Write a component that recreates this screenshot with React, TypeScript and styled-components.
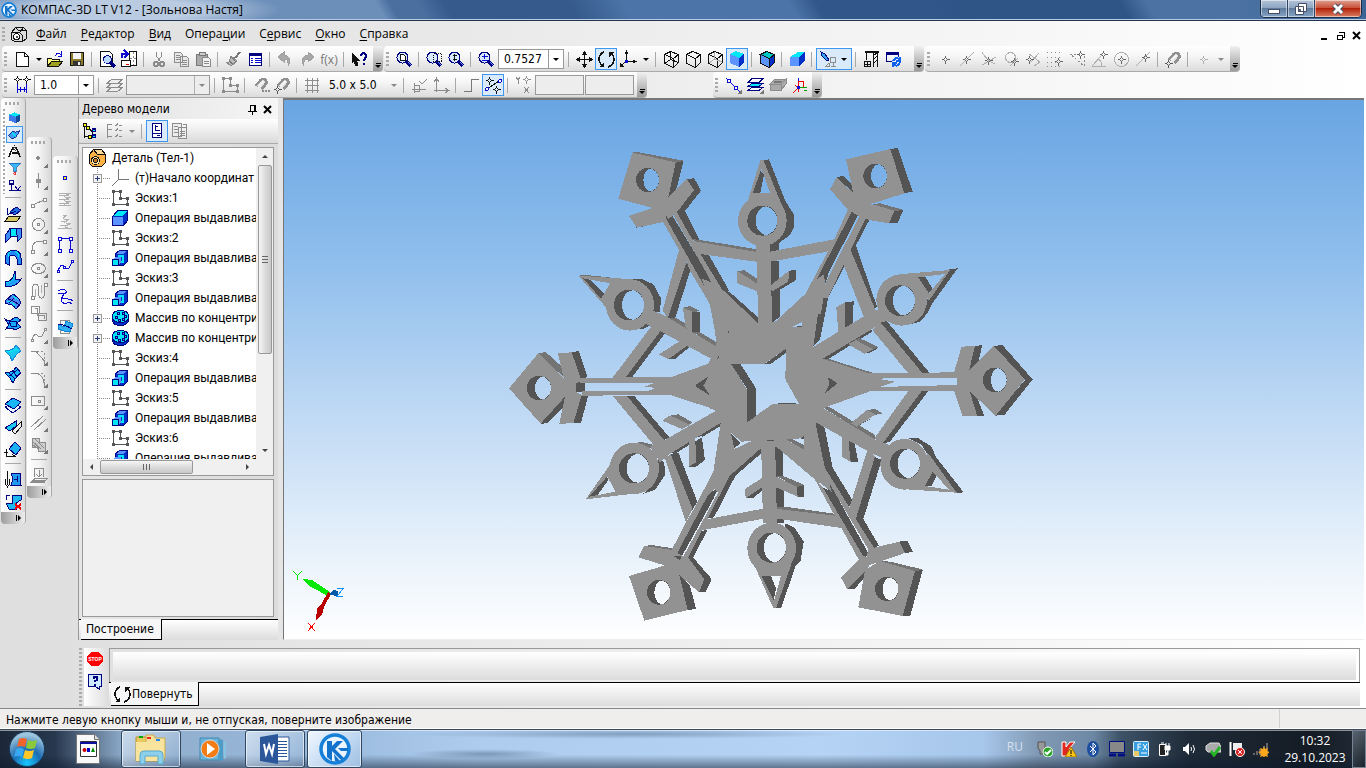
import React from "react";
import styled, { createGlobalStyle, css } from "styled-components";

const ui = `"DejaVu Sans Condensed", "Noto Sans", sans-serif`;
const segoe = `"Open Sans", "Noto Sans", sans-serif`;
const list = `Roboto, "Noto Sans", sans-serif`;

const Global = createGlobalStyle`
  * { box-sizing: border-box; }
  body { margin: 0; font-family: ${ui}; font-size: 12px; color: #000; }
  button { font: inherit; color: inherit; background: none; border: 0; padding: 0; margin: 0; }
  ul { list-style: none; margin: 0; padding: 0; }
`;

/* ---------- icons ---------- */

type Stroke = [d: string, stroke?: string, fill?: string, width?: number];

const K = "#111";
const G = "#8c8c8c";
const LG = "#b0b0b0";
const B = "#0a0ad0";
const N = "#000080";
const C = "#00e8f8";
const M = "#5c94ff";
const D = "#0030c8";

const circle = (x: number, y: number, r: number) =>
  `M${x - r} ${y}a${r} ${r} 0 1 0 ${2 * r} 0a${r} ${r} 0 1 0 ${-2 * r} 0z`;
const sq = (x: number, y: number, s = 2) => `M${x} ${y}h${s}v${s}h${-s}z`;
const star = (x: number, y: number) =>
  `M${x - 3.5} ${y + 0.5}h2l2 -2v-2v2l2 2h2h-2l-2 2v2v-2l-2 -2z`;
const lens = (x: number): Stroke[] => [
  [circle(x, 8.5, 5.5), N, "#d8e8ff"],
  ["M13 13l4 4", N, "none", 3],
  ["M14 13l3 3", M, "none", 1],
];
const wire = (c: string): Stroke[] => [
  ["M3.500 5.500l6 -3l8 3v8l-5 5l-9 -4zM3.500 5.500l9 4l5 -4M12.500 9.500v9", c],
];
const mini = (...s: Stroke[]): Stroke[] => [...s, ["M19 14v5h-5z", "none", "#777"]];
const sketchIn = (c: string): Stroke[] => [
  ["M3.500 3.500h7v7h7v6h-14z", c],
  [sq(2, 2, 3) + sq(9, 2, 3) + sq(9, 9, 3) + sq(16, 9, 3) + sq(16, 15, 3) + sq(2, 15, 3), "none", c],
];
const extrude: Stroke[] = [
  ["M2.500 8.500l5 -6h10v10l-4 5h-11z", N, D],
  ["M3 8l5 -5h9l-4 5z", "none", C],
  ["M3 9h10v8h-10z", "none", M],
];
const cut: Stroke[] = [
  ["M5.500 5.500l4 -3h8v11l-4 4h-8z", N, D],
  ["M6 6l4 -3h7l-4 3z", "none", M],
  ["M8 7h5v2h-3v3h-2zM12 7h2v8h-4v-2h2z", "none", C],
  ["M2.500 11.500h6v6h-6z", N, C],
  ["M3 11l3 -2h5l-2 2zM9 11l2 -2v5l-2 2z", "none", M],
];
const magnet = (c: string): Stroke[] => [
  ["M6 11l5 -6q4 -2 5 1q1 2 -1 4l-4 4", c, "none", 3],
  ["M7 11l5 -5q2 -1 3 1l-5 6", "#ddd", "none", 1],
];

const icons: Record<string, Stroke[]> = {
  part: [
    ["M2.500 8.500l4 -5h8l3 3v8l-4 3h-8l-3 -2z", K, "#ddd"],
    ["M2.500 8.500h8l3 3v6M10.500 8.500l4 -5M6.500 3.500l3 3h8", K],
    [circle(7.5, 12.5, 3), K, "#fff"],
    [sq(7, 12, 2), "none", "#555"],
  ],
  new: [["M4.500 3.500h8l4 4v10h-12z", K, "#fff"], ["M12.500 3.500v4h4", K]],
  open: [
    ["M2.500 17.500v-8h4l1 1h7v3", K, "#ffff80"],
    ["M2.500 17.500l4 -5h11l-4 5z", K, "#a0a020"],
    ["M10 7q3 -5 6 -1M16.500 2v5h-4", B],
  ],
  save: [
    ["M3.500 3.500h13v13h-13z", K, "#8c7c2c"],
    ["M6 4h8v6h-8z", "none", "#f4f4f4"],
    ["M6 12h8v5h-8z", "none", "#333"],
    ["M11 13h2v3h-2z", "none", "#eee"],
  ],
  preview: [
    ["M3.500 2.500h9l3 3v12h-12z", K, "#fff"],
    [circle(10.5, 10.5, 4), N, "#b8d8ff"],
    ["M13 13l5 5", N, "none", 3],
  ],
  print: [
    ["M10.500 2.500h7v14h-7z", K, "#fff"],
    ["M14.500 3v13M11 9.500h6", "dash"],
    ["M2.500 11.500h9v6h-9z", K, "#fff"],
    ["M7 15.500h3", "#e00", "none", 1],
    ["M3 9v-4h5M5 1l4 4l-4 4", B, "none", 2],
  ],
  cut: [["M7.500 3v4l4 6M12.500 3v4l-4 6", G], [circle(7, 15, 2) + circle(13, 15, 2), G, "none", 2]],
  copy: [
    ["M3.500 3.500h6l2 2v8h-8zM9.500 7.500h6l2 2v8h-8z", G, "#e8e8e8"],
    ["M5 6.500h4M5 8.500h4M5 10.500h4M11 11.500h5M11 13.500h5M11 15.500h5", G],
  ],
  paste: [
    ["M3.500 5.500h11v11h-11z", "#777", "#aaa"],
    ["M6 3h6v3h-6z", "#777", "#ccc"],
    ["M9.500 8.500h6l2 2v7h-8z", G, "#f0f0f0"],
    ["M11 12.500h5M11 14.500h5", G],
  ],
  brush: [["M17 3l-5 6", "#777", "none", 2], ["M8 7l6 5l-6 5l-5 -4l3 0z", "#888", "#bbb"], ["M8 8l5 5M6 12l4 3", "#777"]],
  table: [
    ["M4.500 4.500h12v12h-12z", N, "#fff"],
    ["M4 5.500h13", N, "none", 3],
    ["M6 9.500h2M10 9.500h6M6 11.500h2M10 11.500h6M6 13.500h2M10 13.500h6", B],
  ],
  undo: [["M9 3l-6 5l6 5v-3q5 0 4 7q5 -9 -4 -11z", "#a0a0a0", "#a8a8a8"]],
  redo: [["M11 3l6 5l-6 5v-3q-5 0 -4 7q-5 -9 4 -11z", "#a0a0a0", "#a8a8a8"]],
  help: [
    ["M3 4l7 7h-3l2 5l-2 1l-2 -5l-2 2z", K, K],
    ["M12 7q0 -3 3 -3q3 1 2 4l-2 3v1M14 15h2", N, "none", 2],
  ],
  zoomPage: [...lens(8.5), ["M6.500 5.500h3l2 2v4h-5z", K, "#fff"]],
  zoomRegion: [...lens(8.5), ["M9.500 4.500h8v8h-8z", "dashK"]],
  zoomDyn: [...lens(8.5), ["M8.500 5v7M6.500 6.500h4M6.500 10.500h4", K]],
  zoomPm: [...lens(8.5), ["M5.500 7.500h6M8.500 5v5M5.500 11.500h6", B]],
  move: [["M10.500 3v15M3 10.500h15", K], ["M10.500 2l3 4h-6zM10.500 19l3 -4h-6zM2 10.500l4 3v-6zM19 10.500l-4 3v-6z", "none", K]],
  rotate: [
    ["M8 3q-5 2 -5 7q0 4 4 7", K, "none", 1.5],
    ["M12 18q6 -2 6 -8q0 -3 -3 -6", K, "none", 1.5],
    ["M3 18h5v-5zM13 3h5l-5 5z", "none", K],
  ],
  axes: [
    ["M8.500 12v-9M8 12.500h9M8 12l-5 5", K],
    ["M8.500 1l2 4h-4zM19 12.500l-4 2v-4zM2 18v-4l4 4z", "none", K],
    [sq(7, 11, 3), "none", B],
  ],
  cubeWire: [...wire(K), ["M3.500 14.500l6 -4l8 3M9.500 2.500v8", K]],
  cubeHidden: wire(K),
  cubeThin: [...wire(K), ["M4 14l5.500 -4l7.500 3M9.500 3v7", LG]],
  cubeShade: [["M3 5l6 -3l8 3l-5 4z", "none", C], ["M3 5l9 4v9l-9 -4z", "none", M], ["M12 9l5 -4v9l-5 4z", "none", D]],
  cubeEdges: [["M3.500 5.500l6 -3l8 3l-5 4z", K, "#00c8c8"], ["M3.500 5.500l9 4v9l-9 -4z", K, M], ["M12.500 9.500l5 -4v8l-5 5z", K, D]],
  persp: [["M3 8l8 -5h7l-6 5z", "none", C], ["M3 8h9v9h-9z", "none", M], ["M12 8l6 -5v8l-6 6z", "none", D]],
  light: [
    ["M3 3l4 2l4 6l-2 1l-5 -5z", N, "#30a8f0"],
    ["M12.500 8.500h5v5h-5zM15.500 14v4M13 17.500h5M8 17.500h3v-4M11 14l-4 4", G],
  ],
  crane: [
    ["M3.500 3.500h14M12.500 3v15M16.500 3v15M12 7l4 -3M12 11l4 -4M12 15l4 -4M5.500 4v7M3 17.500h6", K],
    ["M3.500 12.500h6v5h-6zM6.500 12v5M3 15.500h6", K],
    ["M4 3h14", K, "none", 2],
  ],
  refresh: [
    ["M3.500 12.500v-9h12v4M3.500 12.500h5", N],
    ["M3 4h13", N, "none", 3],
    ["M10 12q2 -4 6 -2M17 13q-2 5 -6 3M17 8v4h-4M10 18v-4h4", "#1060f0", "none", 2],
  ],
  s1: [[star(10, 10), "#666"]],
  s2: [["M3 17l14 -14", LG], [star(9, 10), "#666"]],
  s3: [["M3 3q4 8 13 12M3 16l14 -8", LG], [star(9, 11), "#666"]],
  s4: [[circle(9.5, 8.5, 5), LG], ["M9 17l8 -8", LG], [star(13, 12), "#666"]],
  s5: [["M6 5l11 8l-6 4M8 13l8 -9", LG], [star(6, 10), "#666"]],
  s6: [["M2 3.500h16M2 8.500h16M2 13.500h16M2 17.500h16", "dots"], [star(13, 12), "#666"]],
  s7: [["M3 5h14v12z", "dash"], [star(13, 5), "#666"]],
  s8: [["M3 17.500h14M3 17l10 -11M9 10q4 2 4 7", LG], [star(14, 5), "#666"]],
  s9: [[circle(10.5, 10.5, 7), LG], [star(10, 10), "#666"]],
  s10: [["M3 17l14 -14", LG], [star(12, 8), "#666"]],
  s11: [[star(10, 10), LG]],
  mag: [...magnet("#909090"), [star(5, 14), "#555"]],
  mag2: [...magnet("#909090"), [sq(12, 15) + sq(15, 15) + sq(18, 15), "none", G]],
  step: [
    [star(5, 4), K],
    [star(14, 4), K],
    ["M5.500 9v9M14.500 9v9M6 14.500h8M8 12v5M12 12v5", B],
  ],
  layers: [["M2.500 16.500l5 -4h11l-5 4zM2.500 12.500l5 -4h11l-5 4zM2.500 8.500l5 -4h11l-5 4z", G, "#eee"]],
  sketchG: sketchIn(G),
  grid: [["M3 5.500h14M3 10.500h14M3 15.500h14M5.500 3v15M10.500 3v15M15.500 3v15", G]],
  cs: [["M5.500 18v-10M3 14.500h14M5.500 10.500h5v6h-5zM10 6l3 3l5 -5", G]],
  ortho: [["M5.500 17v-13M3 7l2.500 -4l2.500 4M3 15.500h14M14 13l4 2.500l-4 2.500", G]],
  elbow: [["M3 16.500h7.500v-12h7.500", "#777"]],
  snapOn: [
    ["M4 14l12 -8", K],
    [star(6, 5), K],
    [star(13, 14), K],
    [circle(4, 14, 1.5) + circle(17, 6, 1.5), B, "#fff"],
  ],
  yx: [["M3 2l2 3l2 -3M5.500 5v4M11 12l5 6M16 12l-5 6", G], [star(13, 4), G]],
  line: [["M3 3l14 14", B], [circle(6, 6, 2) + circle(13, 13, 1.5), B, "#fff"], ["M19 14v5h-5z", "none", "#777"]],
  layersB: [
    ["M3 15.500l4 -3h11l-4 3z", N, "#fff"],
    ["M3 11.500l4 -3h11l-4 3z", N, C],
    ["M3 7.500l4 -4h11l-4 4z", N, "#fff"],
    ["M19 14v5h-5z", "none", "#777"],
  ],
  brick: [["M3 9l5 -5h11l-5 5zM3 9h11v6h-11zM14 9l5 -5v5l-5 6z", G, "#aaa"], ["M7 7l4 -1h4l-3 2z", "#777", "#ddd"]],
  lcs: [
    ["M9.500 3v10", B],
    ["M9.500 6.500h5v6h-5z", "#e00"],
    ["M9 12.500h9M15 15.500h3", "#00a000"],
    ["M9 13l-5 5M6 10l3 3v4", "#e00"],
    [sq(8, 11, 3), "none", B],
  ],

  lCube: [["M3 6l7 -3l7 3l-5 3z", "none", C], ["M3 6l9 3v9l-9 -4z", "none", "#3f7ae8"], ["M12 9l5 -3v8l-5 4z", "none", "#124a9c"]],
  lSurf: [["M2 11l6 -6l3 2l6 -2l-5 8l-5 3z", N, "#38a0f0"], ["M7 7l5 6", C, "none", 2]],
  lCompass: [["M8 4l-6 14M12 4l6 14M6 12l8 0M10 1v2", K, "none", 2], [circle(10, 6, 2), K, "#fff"]],
  lFilter: [["M3 3h15l-6 6v5h-3v-5z", "#1a60b0", "#38b8f8"], [circle(10.5, 16.5, 1.5), "#d00", "#fcc"]],
  lLast: [["M3 3h6v5h-6zM6 9v8M3 17h15M11 11l3 5l5 -6", N, "none", 1.5]],
  l1: [["M2 18l4 -5h12l-4 5z", K, "#d8c860"], ["M7 9l6 -5l5 3l-6 5z", N, "#2070e0"], ["M4 12l9 -4M4 5v7", N]],
  l2: [["M2.500 9.500l5 -6v9l-5 5z", N, "#3c8cf8"], ["M7.500 3.500h7v8h-7z", N, C], ["M13.500 3.500h5v9l-4 4z", N, "#3c8cf8"], ["M6 3.500h12", N]],
  l3: [["M2 16v-6q2 -7 9 -7q7 1 7 8v6h-4v-5q-1 -4 -5 -4q-3 0 -3 5v5z", N, "#2088f0"], ["M8 4q-3 2 -3 6M12 4q4 2 4 6", C]],
  l4: [["M2 13q8 0 10 -11v9l6 -1q-4 8 -16 8z", N, "#20a0f8"], ["M3 14q7 -1 9 -8", C]],
  l5: [["M2 10l8 -7q6 3 8 9l-5 6q-4 -6 -11 -5z", N, "#4888f0"], ["M5 8q7 2 11 6M6 12l7 -7", N], ["M4 10q6 1 9 6M9 4l6 5", C]],
  l6: [["M2 6l4 2l7 -4l5 3l-4 3l4 4l-6 3l-3 -2l-6 1l3 -4z", N, "#18a8f8"], ["M6 8h7v5h-5z", N]],
  l7: [["M2 8q8 0 11 -6l5 6q-5 3 -9 10l-2 -5z", "#1888d8", "#18c8f0"], ["M3 9q8 -1 12 -3", C]],
  l8: [["M2 8q8 0 11 -6l5 6q-5 3 -8 10l-3 -5z", N, "#18b8f8"], ["M6 8l6 6M10 6l4 6M5 12l9 -7", N]],
  l9: [["M2 12l8 -4l8 4l-8 6z", N, "#e8f4ff"], ["M2 9l8 -6l8 4l-7 7z", N, "#18b8f8"]],
  l10: [["M2 11l11 -7v5l-6 5z", N, "#18c8f0"], ["M9 14l9 -9v5l-6 7z", K, "#eee"]],
  l11: [["M6 10l6 -7l6 6l-5 7z", N, "#18b0f0"], ["M3.500 10v7.500h9M1 13.500h4M9 15l3 2.500", K]],
  l12: [["M4.500 2v14M2.500 10v5l2 3l2 -3v-5", K], ["M8 4h10l-1 6l1 6h-10l2 -6z", N, "#2098f0"], ["M11 10h3v3M14 7v4", N]],
  l13: [["M9 4h9v5l-5 3v6h-7l-3 -6h6z", N, "#20b8f0"], ["M12 13l6 5M18 13l-6 5", "#e00", "none", 2], ["M3 9v-5h4", N]],

  p1: mini([circle(9, 9, 1.2), G, G]),
  p2: mini(["M9.500 2v15", G], [circle(9.5, 10, 2), G, G]),
  p3: mini(["M4 12l11 -5", G], [sq(2, 11, 3) + sq(14, 5, 3), G, "#fff"]),
  p4: mini([circle(9.5, 9.5, 6) + circle(9.5, 9.5, 1), G]),
  p5: mini(["M4 15q-3 -8 5 -11h5", G], [sq(2, 13, 3) + sq(14, 3, 3), G, "#fff"]),
  p6: mini(["M2.500 9.500a7 5 0 1 0 14 0a7 5 0 1 0 -14 0z" + circle(9.5, 9.5, 1), G]),
  p7: [["M3.500 16v-8q0 -5 3 -5t3 5v4q0 5 3 5t3 -5v-9", G], ["M6.500 16v-8M12.500 12v-8", LG], [sq(2, 15, 3) + sq(15, 2, 3), G, "#fff"]],
  p8: [["M2.500 3.500h8v7h7v7h-8v-7h-7zM5.500 5.500h3v7h7v3", G]],
  p9: mini(["M3 15q2 -8 6 -4t7 -7", G], [sq(2, 14, 2) + sq(15, 3, 2), G, "#fff"]),
  p10: mini(["M2 4.500h5l8 9v4", G], ["M8 4.500h7v8", "dash"]),
  p11: mini(["M2 4.500h3q9 0 10 9v4", G], ["M8 4.500h7v8", "dash"]),
  p12: mini(["M2.500 5.500h13v9h-13z" + sq(9, 9), G]),
  p13: mini(["M2 14l12 -11M5 17l12 -11", G]),
  p14: mini(["M3.500 3.500h7v4h6v9h-7v-4h-6z", G, "#ccc"], ["M3 6l9 8M5 3l10 10M3 9l6 5", G]),
  p15: [["M5.500 11.500v-8h9v8M10 5v6M7 9l3 3l3 -3M2 17.500h13l3 -4h-12z", G], ["M3 15.500h13", G, "none", 2]],

  q1: [[circle(10, 10, 2), B, "#ff0"]],
  q2: [["M4 3.500h12q-14 4 0 4q-14 4 0 4q-14 4 0 4h-12M4 5.500h10M4 9.500h10M4 13.500h10", LG]],
  q3: [["M8 3.500h4q-8 4 2 4q-10 4 2 4q-12 4 1 5h-14M6 9.500h6M5 13.500h8", LG]],
  q4: [["M4.500 16v-11.500h11v11.500", B], [sq(3, 3, 3) + sq(14, 3, 3) + sq(3, 15, 3) + sq(14, 15, 3), B, "#fff"]],
  q5: [["M3 15q3 -9 7 -4t7 -6", B], [sq(2, 14) + sq(8, 10) + sq(16, 4), B, "#fff"]],
  q6: [["M3 5q6 -4 9 1q-8 5 -3 7q6 -1 9 2", B], ["M3 8q5 -2 6 1q-6 6 1 9q4 -3 7 0", B]],
  q7: [["M5.500 4.500h9v13h-9z", G], ["M3 8l6 3l2 -6l7 3l-3 8l-6 -1l-6 -2z", "#1080d0", "#30b0f0"], ["M3 8q8 1 14 5", N]],

  treeA: [["M4.500 3v14M4 5.500h4M4 15.500h5M9 7l3 4v6", K], [sq(3, 2, 3) + sq(6, 5, 3) + sq(8, 14, 3), K, "#ff0"], [sq(12, 7, 4) + sq(12, 13, 4), "none", N], ["M13 9h2M13 15h2", C]],
  treeB: [["M3.500 3v14M4 3.500h4M4 8.500h4M4 15.500h4M11 4l1 1l2 -3M11 9l1 1l2 -3M11 15l1 1l2 -3M15 4.500h3M15 9.500h3M15 15.500h3", G]],
  treeC: [["M5.500 2.500h9v14h-9z", N, "#fff"], ["M8.500 4v5h4M8 5.500h3M5 12.500h9M10 14.500h3", N]],
  treeD: [["M3.500 2.500h9v13h-9zM9.500 6.500h8v11h-8z", G, "#eee"], ["M5 5.500h4M5 8.500h4M5 11.500h4M11 10.500h5M11 12.500h5M11 14.500h5M14 3.500h3v4", G]],
  detail: [
    ["M2.500 6.500l4 -5h8l4 5v8l-4 4h-9l-3 -3z", K, "#ffb347"],
    ["M6.500 1.500h8l4 5h-8z", K, "#ffd890"],
    [circle(8.5, 12.5, 4), K, "#ffe9a8"],
    [circle(8.5, 12.5, 2), K, "#c87818"],
  ],
  origin: [["M8.500 1v10.500h10M8 12l-6 6", "#777"]],
  sketch: sketchIn("#555"),
  extrude,
  cutop: cut,
  array: [
    ["M2.500 8.500q0 -6 8 -6t8 6v4q-1 5 -8 5t-8 -5z", N, D],
    ["M2.500 8.500q0 -6 8 -6t8 6t-8 6t-8 -6z", N, C],
    [sq(7, 4, 2) + sq(12, 4, 2) + sq(5, 8, 2) + sq(14, 7, 2) + sq(8, 11, 2) + sq(12, 10, 2), N, M],
  ],
  stop: [["M6 2h8l5 5v6l-5 5h-8l-5 -5v-6z", "none", "#f00"]],
  ask: [["M3.500 3.500h13v12h-2v3l-4 -3h-7z", N, "#cdeaff"], ["M8 7h1v-1h3v3l-2 1v1M9 13.500h2", N, "none", 2]],
};

const Svg = styled.svg`
  display: block;
  flex: none;
`;

const Icon = ({ n }: { n: string }) => (
  <Svg width={20} height={20} viewBox="0 0 20 20" aria-hidden="true" shapeRendering="crispEdges">
    {(icons[n] || []).map(([d, s = K, f = "none", w = 1], i) => (
      <path
        key={i}
        d={d}
        stroke={s === "dash" || s === "dots" ? G : s === "dashK" ? K : s}
        fill={f}
        strokeWidth={w}
        strokeDasharray={s === "dash" ? "2 2" : s === "dots" ? "1 3" : s === "dashK" ? "1 1" : undefined}
      />
    ))}
  </Svg>
);

/* ---------- window frame ---------- */

const Desktop = styled.div`
  height: 100vh;
  display: flex;
  flex-direction: column;
  overflow: hidden;
  background: linear-gradient(90deg, #dedede, #fff);
`;

const TitleBar = styled.header`
  height: 21px;
  flex: none;
  display: flex;
  align-items: center;
  gap: 4px;
  padding-left: 1px;
  border-bottom: 1px solid #22344f;
  box-shadow: inset 0 -1px #b9cbe2;
  font-family: ${segoe};
  background:
    radial-gradient(ellipse 160px 22px at 120px 10px, rgba(205, 218, 235, 0.8) 50%, rgba(205, 218, 235, 0)),
    linear-gradient(60deg, #6c8fba 0 28%, #4b70a0 29% 31%, #355a8b 33% 42%, #4d74a8 46% 58%, #31568a 60% 68%, #2f5587 70% 82%, #4b72a2 84% 90%, #3b6496);
`;

const Title = styled.h1`
  margin: 0;
  flex: 1;
  font-size: 12px;
  font-weight: 400;
  line-height: 18px;
`;

const Caption = styled.div`
  display: flex;
  align-self: flex-start;
  height: 18px;
  margin-right: 4px;
  border: 1px solid #1d2f48;
  border-top: 0;
  border-radius: 0 0 5px 5px;
  overflow: hidden;
`;

const CaptionButton = styled.button<{ $close?: boolean }>`
  width: ${(p) => (p.$close ? 46 : 27)}px;
  display: grid;
  place-items: center;
  border-right: ${(p) => (p.$close ? 0 : "1px solid #2e4463")};
  box-shadow: inset 0 0 0 1px rgba(255, 255, 255, 0.5);
  background: ${(p) =>
    p.$close
      ? "linear-gradient(#dfa191, #c9523b 45%, #b3230c 50%, #d98064)"
      : "linear-gradient(#b4c4d8, #8ea5c1 45%, #5f7c9f 50%, #86a4c6)"};
`;

const MenuBar = styled.nav`
  height: 25px;
  flex: none;
  display: flex;
  align-items: center;
  padding-right: 2px;
  font-family: ${segoe};
`;

const MenuItem = styled.button`
  padding: 0 7px;
  line-height: 22px;
  u {
    text-underline-offset: 2px;
  }
`;

const MdiButtons = styled.div`
  margin-left: auto;
  display: flex;
  align-items: center;
  gap: 2px;
  padding-top: 5px;
`;

const Grip = styled.span<{ $flat?: boolean }>`
  flex: none;
  width: ${(p) => (p.$flat ? 16 : 3)}px;
  height: ${(p) => (p.$flat ? 3 : 14)}px;
  background: repeating-linear-gradient(${(p) => (p.$flat ? 90 : 180)}deg, #aaa 0 2px, transparent 2px 4px);
  margin: ${(p) => (p.$flat ? "4px auto" : "0 4px 0 2px")};
`;

/* ---------- toolbars ---------- */

const BarRow = styled.div`
  height: 26px;
  flex: none;
  display: flex;
  padding-left: 2px;
`;

const Toolbar = styled.div<{ $gap?: number }>`
  display: flex;
  align-items: center;
  height: 26px;
  padding-top: 1px;
  margin-left: ${(p) => p.$gap || 0}px;
  border-bottom: 1px solid #aaa;
  border-radius: 4px;
  background: linear-gradient(#fff, #f6f6f6 40%, #dcdcdc);
`;

const ToolButton = styled.button<{ $on?: boolean; $wide?: boolean }>`
  flex: none;
  width: ${(p) => (p.$wide ? 36 : 22)}px;
  height: 22px;
  display: flex;
  align-items: center;
  justify-content: center;
  ${(p) =>
    p.$on &&
    css`
      border: 1px solid #3d97ee;
      background: #d9ebfb;
    `}
`;

const Sep = styled.span`
  flex: none;
  width: 8px;
  height: 15px;
  background: linear-gradient(#a8a8a8, #a8a8a8) 3px 0 / 1px 100% no-repeat;
`;

const Drop = styled.button<{ $dim?: boolean; $w?: number }>`
  flex: none;
  width: ${(p) => p.$w || 13}px;
  height: 20px;
  display: grid;
  place-items: center;
  color: ${(p) => (p.$dim ? "#888" : "#000")};
  &::after {
    content: "";
    border: 3px solid transparent;
    border-top-color: currentColor;
    border-bottom: 0;
  }
`;

const Cap = styled.button`
  align-self: stretch;
  width: 10px;
  margin: -1px 0 0 auto;
  display: flex;
  flex-direction: column;
  align-items: center;
  justify-content: flex-end;
  gap: 1px;
  padding-bottom: 3px;
  border-radius: 0 4px 4px 0;
  background: linear-gradient(#f0f0f0, #c4c4c4 50%, #9a9a9a);
  &::before {
    content: "";
    width: 5px;
    height: 1px;
    background: #000;
  }
  &::after {
    content: "";
    border: 3px solid transparent;
    border-top-color: #000;
    border-bottom: 0;
  }
`;

const Combo = styled.span<{ $w: number; $off?: boolean }>`
  position: relative;
  flex: none;
  width: ${(p) => p.$w}px;
  height: 20px;
  display: flex;
  margin: 0 1px;
  border: 1px solid #999;
  background: ${(p) => (p.$off ? "#ededed" : "#fff")};
  &::after {
    content: "";
    position: absolute;
    right: 4px;
    top: 8px;
    border: 3px solid transparent;
    border-top-color: ${(p) => (p.$off ? "#888" : "#000")};
    border-bottom: 0;
    pointer-events: none;
  }
  select {
    appearance: none;
    flex: 1;
    min-width: 0;
    border: 0;
    padding: 0 16px 0 5px;
    color: #000;
    font: 12px ${ui};
    background: linear-gradient(#999, #999) right 14px top 0 / 1px 100% no-repeat;
  }
`;

const Coord = styled.input`
  width: 49px;
  height: 20px;
  margin-right: 1px;
  border: 1px solid #999;
  background: #ededed;
`;

const Fx = styled.span`
  font: 12px ${segoe};
  color: #777;
`;

const GridStep = styled.span`
  width: 58px;
  padding-left: 6px;
`;

const Fill = styled.span<{ $w: number }>`
  width: ${(p) => p.$w}px;
`;

/* "|" is a separator, "v" and "vd" are menu arrows, "*" marks a pressed button. */
const tools = (names: string[]) =>
  names.map((t, i) => {
    if (t === "|") return <Sep key={i} />;
    if (t === "v") return <Drop key={i} aria-label="Список" />;
    if (t === "vd") return <Drop key={i} $dim aria-label="Список" />;
    if (t === "fx")
      return (
        <ToolButton key={i}>
          <Fx>f(x)</Fx>
        </ToolButton>
      );
    const on = t[0] === "*";
    const name = on ? t.slice(1) : t;
    return (
      <ToolButton key={i} $on={on} aria-label={name}>
        <Icon n={name} />
      </ToolButton>
    );
  });

/* ---------- side columns ---------- */

const Body = styled.main`
  flex: 1;
  min-height: 0;
  display: flex;
`;

const Rail = styled.div<{ $top: number }>`
  flex: none;
  align-self: flex-start;
  width: 25px;
  margin: ${(p) => p.$top}px 0 0 1px;
  display: flex;
  flex-direction: column;
  border-right: 1px solid #a8a8a8;
  border-radius: 4px;
  background: linear-gradient(90deg, #fff, #f4f4f4 50%, #d8d8d8);
`;

const RailButton = styled.button<{ $short?: boolean; $on?: boolean }>`
  height: ${(p) => (p.$short ? 17 : 22)}px;
  margin-left: ${(p) => (p.$short ? 5 : 1)}px;
  width: ${(p) => (p.$short ? 17 : 22)}px;
  display: grid;
  place-items: center;
  border: ${(p) => (p.$on ? "1px solid #3d97ee" : "0")};
  background: ${(p) => (p.$on ? "#d9ebfb" : "none")};
  svg {
    width: ${(p) => (p.$short ? 15 : 20)}px;
    height: ${(p) => (p.$short ? 15 : 20)}px;
  }
`;

const TabGroup = styled.div`
  background: repeating-linear-gradient(180deg, #aaa 0 2px, transparent 2px 4px) 2px 0 / 2px 100% no-repeat;
`;

const RailSep = styled.span`
  height: 8px;
  background: linear-gradient(#a8a8a8, #a8a8a8) 4px 3px / 16px 1px no-repeat;
`;

const RailCap = styled.button`
  height: 12px;
  display: flex;
  align-items: center;
  justify-content: flex-end;
  gap: 1px;
  padding-right: 4px;
  border-radius: 0 0 4px 4px;
  background: linear-gradient(90deg, #9c9c9c, #eee);
  &::before {
    content: "";
    width: 1px;
    height: 6px;
    background: #000;
  }
  &::after {
    content: "";
    border: 3px solid transparent;
    border-left-color: #000;
    border-right: 0;
  }
`;

const RailItems = ({ names }: { names: string[] }) => (
  <>
    {names.map((n, i) =>
      n === "|" ? (
        <RailSep key={i} />
      ) : (
        <RailButton key={i} aria-label={n}>
          <Icon n={n} />
        </RailButton>
      )
    )}
    <RailCap aria-label="Ещё" />
  </>
);

/* ---------- model tree ---------- */

const Panel = styled.aside`
  flex: none;
  width: 200px;
  margin-right: 5px;
  display: flex;
  flex-direction: column;
  border-left: 1px solid #999;
  background: linear-gradient(90deg, #e6e6e6, #dcdcdc);
`;

const PanelHead = styled.div`
  height: 21px;
  flex: none;
  display: flex;
  align-items: center;
  padding: 0 3px;
  background: linear-gradient(90deg, #dfdfdf, #f6f6f6);
  span {
    flex: 1;
  }
`;

const PanelTools = styled.div`
  height: 25px;
  flex: none;
  display: flex;
  align-items: center;
  background: linear-gradient(#fff, #dadada);
  border-bottom: 1px solid #aaa;
`;

const Frames = styled.div`
  flex: 1;
  min-height: 0;
  display: flex;
  flex-direction: column;
  gap: 3px;
  padding: 3px 4px 2px 3px;
`;

const TreeFrame = styled.div`
  flex: 330;
  min-height: 0;
  display: grid;
  grid-template: minmax(0, 1fr) 16px / minmax(0, 1fr) 17px;
  border: 1px solid #999;
  background: #f0f0f0;
`;

const DetailFrame = styled.div`
  flex: 137;
  border: 1px solid #999;
  background: #f0f0f0;
`;

const Tree = styled.ul`
  overflow: hidden;
  background: #fff;
  font-family: ${list};
`;

const TreeRow = styled.li<{ $root?: boolean }>`
  height: 20px;
  display: flex;
  align-items: center;
  gap: 5px;
  padding-left: ${(p) => (p.$root ? 4 : 27)}px;
  white-space: nowrap;
  background: ${(p) =>
    p.$root
      ? "none"
      : "repeating-linear-gradient(180deg, #888 0 1px, transparent 1px 2px) 14px 0 / 1px 100% no-repeat, repeating-linear-gradient(90deg, #888 0 1px, transparent 1px 2px) 14px 10px / 13px 1px no-repeat"};
`;

const Expander = styled.button`
  flex: none;
  width: 9px;
  height: 9px;
  margin: 0 3px 0 -17px;
  border: 1px solid #999;
  background:
    linear-gradient(#223a78, #223a78) 3px 1px / 1px 5px no-repeat,
    linear-gradient(#223a78, #223a78) 1px 3px / 5px 1px no-repeat,
    #f4f4f4;
`;

const VScroll = styled.div`
  display: flex;
  flex-direction: column;
  align-items: center;
  justify-content: space-between;
  background: #f0f0f0;
`;

const HScroll = styled.div`
  display: flex;
  align-items: center;
  background: #f0f0f0;
`;

const Arrow = styled.button<{ $dir: "up" | "down" | "left" | "right" }>`
  flex: none;
  width: 17px;
  height: 17px;
  display: grid;
  place-items: center;
  &::after {
    content: "";
    border: 3px solid transparent;
    border-${(p) => ({ up: "bottom", down: "top", left: "right", right: "left" })[p.$dir]}-color: #444;
    border-${(p) => ({ up: "top", down: "bottom", left: "left", right: "right" })[p.$dir]}: 0;
  }
`;

const Thumb = styled.span<{ $v?: boolean }>`
  border: 1px solid #999;
  border-radius: 2px;
  ${(p) =>
    p.$v
      ? css`
          width: 14px;
          flex: 187;
          background:
            repeating-linear-gradient(180deg, #666 0 1px, transparent 1px 3px) center / 6px 7px no-repeat,
            linear-gradient(90deg, #f6f6f6, #dcdcdc 50%, #c8c8c8);
        `
      : css`
          height: 14px;
          flex: 90;
          background:
            repeating-linear-gradient(90deg, #666 0 1px, transparent 1px 3px) center / 7px 6px no-repeat,
            linear-gradient(#f6f6f6, #dcdcdc 50%, #c8c8c8);
        `}
`;

const Rest = styled.span<{ $n: number }>`
  flex: ${(p) => p.$n};
`;

const TabStrip = styled.div<{ $tall?: boolean }>`
  flex: none;
  height: ${(p) => (p.$tall ? 24 : 21)}px;
  display: flex;
  padding-left: 2px;
  border-top: 1px solid #000;
  background: linear-gradient(#fff, #dcdcdc);
`;

const Tab = styled.button<{ $icon?: boolean }>`
  display: flex;
  align-items: center;
  margin-top: -1px;
  padding: ${(p) => (p.$icon ? "0 5px 0 1px" : "0 7px 0 5px")};
  border: solid #000;
  border-width: 0 1px 1px 0;
  background: #f6f6f6;
`;

/* ---------- 3D view ---------- */

const View = styled.section`
  flex: 1;
  min-width: 0;
  margin-right: 2px;
  border: solid #777;
  border-width: 2px 0 0 1px;
  border-bottom: 1px solid #eee;
  background: linear-gradient(#69a5e3, #92c0ed 32%, #bad6f3 55%, #e2eefa 80%, #fff);
  svg {
    display: block;
    width: 100%;
    height: 100%;
  }
`;

const LIGHT = "#929292";
const MID = "#747474";
const DARK = "#545454";

const ell = (cx: number, cy: number, rx: number, ry: number) =>
  `M${cx - rx} ${cy}a${rx} ${ry} 0 1 0 ${2 * rx} 0a${rx} ${ry} 0 1 0 ${-2 * rx} 0z`;

/* A bore through the plate: the front rim and the narrower opening seen through it. */
const bore = (l: number, r: number, cy: number, ry: number, through: number) => ({
  rim: ell((l + r) / 2, cy, (r - l) / 2, ry),
  wall: ell((l + r) / 2, cy, (r - l) / 2, ry) + ell((through + r) / 2, cy, (r - through) / 2, ry - 2),
});

type Part = { x: number; y: number; dark: string; mid?: string; light: string[]; top?: string };

const b1 = bore(408, 477, 120, 36, 430);
const b2 = bore(342, 432, 495, 46, 366);
const b3 = bore(80, 153, 744, 36, 105);
const c1 = bore(295, 366, 108, 37, 318);
const c2 = bore(360, 450, 482, 46, 384);
const c3 = bore(654, 725, 720, 37, 678);
const c4 = bore(-53, 37, 242, 45, -28);
const d1 = bore(357, 447, 280, 45, 380);
const d2 = bore(441, 511, 652, 37, 463);
const e1 = bore(375, 465, 266, 45, 398);
const e2 = bore(330, 400, 642, 36, 353);
const e3 = bore(-25, 63, 518, 45, -3);

const parts: Part[] = [
  {
    x: 500,
    y: 140,
    dark:
      "M527 67L551 62L530 145L505 172ZM560 117L583 115L603 152L555 213L598 300L575 300L530 217L582 150Z" +
      "M492 225L514 222L628 410L634 430L607 437ZM600 342L625 342L688 453L668 457ZM558 366L572 388L526 533L503 533Z" +
      "M400 418L425 417L460 433L483 475L480 515L460 515L430 450ZM577 515L600 515L600 577L577 578Z" +
      "M505 658L525 657L568 622L556 610ZM420 567L435 565L458 552L440 545ZM482 573L497 577L395 714L374 714Z" +
      "M215 637L237 633L263 712L242 714ZM228 726L254 726L254 757L228 757ZM242 766L265 766L243 848L218 850ZM122 851L143 850L192 798L195 770Z" +
      "M248 413L272 420L313 460L303 477ZM408 263L432 259L430 250Z",
    mid:
      "M397 38L412 36L551 62L527 69ZM575 297L600 300L772 328L772 338L590 308ZM505 533L527 533L577 563L577 580Z" +
      "M580 577L600 577L655 610L655 625ZM549 503L570 498L600 513L577 517ZM115 640L137 636L188 682L192 713ZM235 407L260 405L380 418L350 420Z",
    light: [
      "M397 38L527 67L505 172L505 210L458 204L355 176Z" + b1.rim,
      "M505 172L560 117L582 150L532 215L505 238L490 205Z",
      "M387 228L458 204L510 190L495 245L410 263Z",
      "M483 235L495 230L612 437L650 430L640 510L570 392L560 366L503 535L488 512L537 330L490 248Z",
      "M517 220L531 217L600 340L672 458L635 430L620 400Z",
      "M575 302L775 337L775 366L600 342L580 320Z",
      ell(390, 495, 72, 77) + b2.rim,
      "M235 407L400 418L345 450L340 490L328 514ZM250 415L330 430L303 477Z",
      "M430 545L460 512L500 530L655 623L662 672L480 573L455 562Z",
      "M549 503L577 515L577 578L557 563Z",
      "M477 643L540 603L564 615L505 658Z",
      "M455 558L484 570L376 714L337 714Z",
      "M27 745L115 640L191 713L174 640L215 637L242 714L242 727L228 728L228 755L245 765L220 850L178 851L195 770L122 851Z" + b3.rim,
      "M240 714L520 711L468 728L240 728ZM245 753L450 753L515 765L245 767Z",
      "M435 740L468 727L515 711L655 660L720 665L720 808L650 810L510 765L440 755L466 744Z",
    ],
    top: b1.wall + b2.wall + b3.wall + "M588 740L625 708L608 740L630 767Z",
  },
  {
    x: 765,
    y: 140,
    dark:
      "M376 27L398 24L443 155L418 160ZM215 112L235 107L265 138L272 165ZM388 212L415 210L398 249L372 250Z" +
      "M262 207L286 213L192 395L180 435L172 408L152 420ZM296 237L314 238L272 318L250 320ZM232 358L240 376L190 472L165 600L143 622L165 470Z" +
      "M250 318L273 318L336 500L318 512ZM553 388L578 385L500 493L487 520L465 545L425 555L470 520L490 470Z" +
      "M168 658L190 657L325 573L312 566ZM240 487L266 484L263 550L240 567ZM298 641L318 628L343 622L315 638Z" +
      "M343 545L365 543L493 698L470 700ZM630 618L652 615L640 665L611 695ZM687 618L712 615L803 718L718 825L690 827L780 720Z" +
      "M614 752L637 775L658 827L633 829ZM-5 60L12 58L62 185L88 225L86 262L75 285L38 312L42 305L42 335L15 335L15 300L50 240Z" +
      "M18 362L42 362L45 530L20 550ZM460 412L482 412L503 447L490 460ZM-36 158L-15 92L-3 105L-14 158Z",
    mid: "M318 192L345 190L413 209L386 215ZM262 597L285 595L342 622L318 630ZM168 658L195 658L322 698L300 702Z",
    light: [
      "M243 58L376 27L418 160L318 192L290 205L266 165Z" + c1.rim,
      "M195 148L215 112L270 164L305 200L300 240L248 208Z",
      "M285 190L330 195L388 212L372 250L310 240L290 225Z",
      "M250 206L263 210L155 418L176 404L182 435L168 520L60 570L125 455L207 300Z",
      "M287 220L302 235L240 365L188 475L168 470L184 425Z",
      "M10 336L212 297L187 335L10 366Z",
      "M252 318L332 512L300 540L230 360L245 328Z",
      ell(410, 480, 76, 77) + c2.rim,
      "M400 403L555 390L492 482L465 440L440 415ZM460 412L540 402L492 460Z",
      "M143 622L300 527L345 506L378 540L350 547L320 568L168 659Z",
      "M214 502L240 487L240 568L220 577Z",
      "M248 612L272 600L325 628L298 641Z",
      "M322 570L345 545L473 700L430 700Z",
      "M300 700L570 697L577 713L340 713ZM310 752L343 741L577 735L577 752Z",
      "M62 600L170 655L310 700L385 712L342 717L390 725L343 741L320 752L170 806L110 806L62 720Z",
      "M567 697L590 620L630 618L612 693L687 618L780 718L692 827L614 754L637 829L593 828L567 750L577 735L577 713Z" + c3.rim,
      ell(-8, 242, 73, 76) + c4.rim,
      "M-14 60L-5 60L50 194L20 200L-36 200L-52 184ZM-11 85L15 158L-36 158Z",
      "M-27 305L15 310L22 552L-20 552Z",
    ],
    top: c1.wall + c2.wall + c3.wall + c4.wall + "M188 712L215 727L180 760L197 730Z",
  },
  {
    x: 500,
    y: 375,
    dark:
      "M475 250L493 262L495 300L465 345L430 356L460 330L475 290ZM512 235L530 233L663 152L663 140ZM585 190L605 183L615 255L588 275L567 275L588 262Z" +
      "M378 62L402 62L508 187L488 197ZM512 237L535 232L592 380L577 405ZM628 325L634 350L654 342L640 372L545 545L520 543L630 345Z" +
      "M683 310L705 305L642 427L620 430ZM603 468L622 465L580 548L558 550ZM560 550L580 548L635 612L618 650L597 652L613 612Z" +
      "M537 600L570 632L588 702L563 705ZM268 365L318 302L325 315L290 364ZM718 0L740 0L769 42L769 120L742 138L742 42Z",
    mid: "M510 122L535 118L577 142L560 154ZM400 203L430 202L462 210L450 222ZM432 513L455 510L520 520L515 528Z",
    light: [
      ell(403, 280, 74, 77) + d1.rim,
      "M257 373L335 262L340 300L365 335L420 354ZM268 365L322 304L346 350Z",
      "M450 215L500 192L655 103L668 140L512 235L480 262Z",
      "M487 137L510 121L572 150L545 162Z",
      "M567 200L586 190L588 262L567 275Z",
      "M338 62L380 62L492 195L465 215Z",
      "M495 250L512 237L578 402L558 442Z",
      "M640 290L632 325L632 345L526 545L515 525L558 442L580 405Z",
      "M640 340L688 305L622 432L562 552L548 548L655 352Z",
      "M415 547L432 513L517 525L560 550L540 600L490 570Z",
      "M530 550L565 548L613 612L597 652L535 598Z",
      "M387 603L500 570L537 595L563 705L433 737Z" + d2.rim,
      "M608 435L795 400L795 430L605 466Z",
    ],
    top: d1.wall + d2.wall + "M520 543L545 543L540 556Z",
  },
  {
    x: 765,
    y: 375,
    dark:
      "M430 190L460 190L500 215L512 245L596 352L575 355L488 240L470 210ZM270 157L352 115L325 128L275 152ZM250 195L268 203L280 260L255 260Z" +
      "M468 48L490 48L375 200L350 207ZM328 245L350 255L295 432L342 512L325 520L270 432ZM150 142L177 150L203 278L262 375L252 397L178 280Z" +
      "M170 335L188 345L190 320L208 350L312 538L295 550ZM247 643L268 642L302 605L300 588ZM403 498L427 498L443 530L420 535Z" +
      "M450 588L473 585L436 722L413 723ZM503 288L516 298L500 334L480 334ZM60 445L88 458L116 500L106 560L93 570L48 700L25 700L78 570Z" +
      "M-12 603L18 603L33 640L26 678ZM35 428L58 430L58 445L35 443Z",
    mid: "M170 95L195 97L330 180L330 195ZM305 105L330 102L352 115L330 120ZM30 395L60 395L207 416L210 425L30 405ZM345 558L375 560L472 583L450 590Z",
    light: [
      ell(418, 268, 72, 76) + e1.rim,
      "M488 232L575 353L425 343L460 310L474 270ZM503 290L552 344L480 333Z",
      "M172 98L330 193L370 208L365 255L320 235L152 142Z",
      "M258 145L305 105L332 118L275 155Z",
      "M232 183L250 193L257 260L232 247Z",
      "M430 48L470 48L352 207L328 190Z",
      "M308 222L330 245L272 433L252 402Z",
      "M145 305L172 335L297 548L280 552L230 460Z",
      "M178 276L253 397L272 432L327 518L314 530L190 320Z",
      "M228 608L295 542L325 555L300 590L247 643Z",
      "M310 522L403 500L420 534L345 560L300 575Z",
      "M300 585L345 558L450 588L413 723L280 697Z" + e2.rim,
      ell(20, 520, 73, 77) + e3.rim,
      "M-32 570L-10 572L50 572L79 568L33 700L25 700ZM-11 603L48 602L27 678Z",
      "M30 401L210 422L235 460L30 430Z",
    ],
    top: e1.wall + e2.wall + e3.wall,
  },
  {
    x: 675,
    y: 225,
    dark:
      "M147 198L163 200L250 278L255 300ZM342 137L363 135L363 165L314 195L292 195L340 170ZM300 665L325 672L325 755L302 755ZM303 785L327 790L327 850L303 845Z" +
      "M212 820L235 818L264 795L262 785ZM365 785L388 780L388 815L365 815ZM160 290L184 293L160 345ZM360 305L380 303L384 335Z" +
      "M168 625L196 655L175 672ZM258 668L262 682L178 755L165 762L155 755ZM376 640L388 620L388 642Z" +
      "M333 307L378 288L378 293L350 307Z",
    mid: "M187 138L208 136L250 164L248 180ZM303 752L330 755L388 780L365 787ZM333 643L352 643L388 660L388 674Z",
    light: [
      "M80 160L115 175L147 198L252 297L252 312L185 312L160 340L163 290L130 372L103 230Z",
      "M163 290L158 350L128 375L115 290Z",
      "M187 138L250 178L250 200L187 175Z",
      "M288 180L342 137L340 170L290 200Z",
      "M290 300L395 203L425 165L460 180L437 210L414 372L384 340L380 290L333 306Z",
      "M138 588L168 600L168 625L178 672L230 648L260 668L158 758L100 810L88 800L115 740Z",
      "M298 660L330 642L388 674L388 590L420 588L450 730L470 800L412 757Z",
      "M258 640L300 640L306 895L264 895Z",
      "M185 310L245 296L300 290L335 305L380 307L380 320L185 320Z",
      "M200 640L340 636L334 645L300 668L260 668L228 650Z",
      "M400 530L446 543L444 556L420 596L395 590Z",
      "M210 792L264 757L264 785L212 820Z",
      "M303 755L365 785L368 815L303 787Z",
      "M128 345L185 308L380 305L415 368L442 403L442 550L415 592L380 640L290 645L200 650L138 600L130 560L105 550L65 490L88 480L65 475L105 405Z" +
        "M168 417L215 492L217 590L293 537L380 537L331 462L333 372L266 418Z",
    ],
    top: "M300 537L320 534L378 536ZM275 646L298 646L285 650ZM62 480L100 455L85 482L104 510ZM450 505L462 480L460 458L488 475ZM126 400L134 390L130 402ZM168 417L197 418L243 490L243 573L217 592L217 492ZM268 418L333 371L333 384L285 418Z",
  },
];

const Model = () => (
  <svg viewBox="284 100 1080 539" role="img" aria-label="Модель">
    <g shapeRendering="crispEdges" fillRule="evenodd">
      {["dark", "mid", "light", "top"].map((layer) =>
        parts.map((p, i) => (
          <g key={layer + i} transform={`translate(${p.x} ${p.y}) scale(0.33333)`}>
            {layer === "light" ? (
              p.light.map((d, j) => <path key={j} d={d} fill={LIGHT} />)
            ) : (
              <path
                d={p[layer as "dark" | "mid" | "top"] || ""}
                fill={layer === "mid" ? MID : DARK}
                fillRule={layer === "dark" ? "nonzero" : "evenodd"}
              />
            )}
          </g>
        ))
      )}
      <path d="M303 579l9 1l18 12l-2 4l-15 -8l-3 -1z" fill="#00e800" />
      <path d="M331 594l-7 13l-2 8l-6 5l1 -12l4 -3l7 -13z" fill="#b80000" />
      <path d="M330 594l3 -4l5 1v5l-8 -1z" fill="#0058a8" />
      <path d="M293.500 571.500l4 4l4 -4M297.500 575v5" stroke="#00e800" fill="none" />
      <path d="M308 623l7 8M315 623l-7 8" stroke="#f00" fill="none" />
      <path d="M337 588.500h6l-6 8h6" stroke="#0a90ff" fill="none" />
    </g>
  </svg>
);

/* ---------- property panel, status bar ---------- */

const Properties = styled.section`
  height: 68px;
  flex: none;
  display: flex;
  padding: 8px 6px 2px 79px;
`;

const PropGrip = styled.span`
  width: 3px;
  margin-right: 2px;
  background: repeating-linear-gradient(180deg, #aaa 0 2px, transparent 2px 4px);
`;

const PropTools = styled.div`
  width: 25px;
  display: flex;
  flex-direction: column;
  background: linear-gradient(90deg, #fff, #dcdcdc);
`;

const StopText = styled.span`
  position: absolute;
  inset: 0;
  display: grid;
  place-items: center;
  font: bold 5px "Liberation Sans", sans-serif;
  color: #fff;
`;

const StopButton = styled(ToolButton)`
  position: relative;
  svg {
    width: 18px;
    height: 18px;
  }
`;

const PropMain = styled.div`
  flex: 1;
  display: flex;
  flex-direction: column;
`;

const PropField = styled.div`
  flex: 1;
  padding: 3px 3px 2px;
  border: 1px solid #999;
  border-bottom: 0;
  div {
    height: 100%;
    background: linear-gradient(#fff, #dcdcdc);
  }
`;

const Status = styled.footer`
  height: 21px;
  flex: none;
  display: flex;
  align-items: center;
  padding: 2px 6px 0;
  border-top: 1px solid #888;
  border-bottom: 1px solid #fff;
  background: linear-gradient(#d4d0d0, #d4d0d0) right 86px top 0 / 1px 100% no-repeat, #f0eded;
`;

/* ---------- taskbar ---------- */

const Taskbar = styled.div`
  height: 39px;
  flex: none;
  display: flex;
  align-items: stretch;
  color: #fff;
  font-family: ${segoe};
  border-top: 1px solid #3d4a5c;
  box-shadow: inset 0 1px rgba(255, 255, 255, 0.5);
  background:
    radial-gradient(ellipse 75px 5px at 485px 24px, rgba(60, 85, 115, 0.45), transparent),
    radial-gradient(ellipse 220px 5px at 630px 4px, rgba(60, 85, 115, 0.4), transparent),
    linear-gradient(rgba(0, 0, 0, 0) 65%, rgba(10, 25, 45, 0.5)),
    linear-gradient(90deg, #1c2838 0, #27384e 4%, #8eabca 9%, #9dbde0 26%, #aecdee 35%, #b5d4f5 60%, #a6c6ea 72%, #8199b4 76%, #6d88a5 80%, #3e5368 82%, #1f2b38 87%, #141b24 96%, #222c38);
`;

const TaskButton = styled.button<{ $open?: boolean; $active?: boolean; $w: number }>`
  width: ${(p) => p.$w}px;
  flex: none;
  display: grid;
  place-items: center;
  ${(p) =>
    p.$open &&
    css`
      margin-right: 2px;
      border: 1px solid #2e4763;
      border-radius: 3px;
      box-shadow: inset 0 0 0 1px rgba(255, 255, 255, 0.6);
      background: ${p.$active
        ? "linear-gradient(135deg, #f2f8ff, #c6dcf3 50%, #9fbfe2)"
        : "linear-gradient(135deg, rgba(230,240,250,.7), rgba(130,165,205,.35))"};
    `}
`;

const Tray = styled.div`
  margin-left: auto;
  display: flex;
  align-items: center;
  gap: 8px;
  padding-right: 15px;
`;

const Lang = styled.span`
  color: #d5e0ec;
  margin-right: 6px;
  padding-bottom: 6px;
`;

const Clock = styled.time`
  width: 62px;
  margin-right: 6px;
  padding-top: 2px;
  text-align: center;
  line-height: 17px;
`;

const ShowDesktop = styled.button`
  width: 14px;
  border: 1px solid #768493;
  background: linear-gradient(135deg, #57636f, #1b232c);
`;

const TrayIcons = [
  <g key="usb"><path d="M1 1h7v6l-2 3v3h-3v-3l-2 -3z" fill="#999" stroke="#555" /><circle cx="11" cy="11" r="5" fill="#28a428" stroke="#fff" /><path d="M8 11l2 2l4 -4" stroke="#fff" strokeWidth="2" fill="none" /></g>,
  <g key="kav"><path d="M1 1h4v5l4 -5h5l-6 7l6 7h-13z" fill="#e02820" stroke="#fff" /><path d="M10 6l6 10h-12z" fill="#ffc818" stroke="#a07000" /><path d="M10 9v4M10 14v1" stroke="#000" /></g>,
  <g key="bt"><ellipse cx="8" cy="8" rx="6" ry="8" fill="#1c4fa0" /><path d="M5 5l6 6l-3 3v-12l3 3l-6 6" stroke="#fff" fill="none" /></g>,
  <g key="net"><path d="M0.500 0.500h15v11h-15z" fill="#888" stroke="#001080" /><path d="M0 14h7M9 14h7" stroke="#001080" strokeWidth="3" /></g>,
  <g key="fx"><rect x="0.500" y="0.500" width="15" height="15" rx="1" fill="#38a0e0" stroke="#d8eefc" /><path d="M5 3h3M5 3v6M5 6h3M10 3l4 6M14 3l-4 6M8 12h6" stroke="#fff" /><path d="M1 10h5v5h-5z" fill="#e8c868" /></g>,
  <g key="pwr"><path d="M2.500 3.500h6v11h-6zM4 2h3" fill="#222" stroke="#fff" /><path d="M8 5h5v4h-5zM9 2v3M12 2v3M11 9v5h-3" fill="#fff" stroke="#fff" /></g>,
  <g key="vol"><path d="M2 6h2l4 -4v12l-4 -4h-2z" fill="#fff" /><path d="M10 6q1 2 0 4M12 4q3 4 0 8" stroke="#fff" fill="none" /></g>,
  <g key="prn"><path d="M1 5l4 -3h9l2 4v5h-13l-2 -2z" fill="#aaa" stroke="#ddd" /><path d="M6 10l3 4l6 -8" stroke="#28b428" strokeWidth="3" fill="none" /></g>,
  <g key="flag"><path d="M1.500 1v14" stroke="#fff" strokeWidth="2" /><path d="M4 2h9v7h-9z" fill="#eee" /><circle cx="11" cy="11" r="4.500" fill="#d02020" stroke="#fff" /><path d="M9 9l4 4M13 9l-4 4" stroke="#fff" /></g>,
  <g key="wifi"><path d="M0 12h2v2h-2zM3 10h2v4h-2zM6 8h2v6h-2zM10 5h2v9h-2zM13 2h2v12h-2z" fill="#666" /><path d="M11 5l1 3l3 -1l-1 3l3 1l-3 2l1 3l-3 -1l-1 3l-1 -3l-3 1l1 -3l-3 -2l3 -1l-1 -3l3 1z" fill="#ffa81c" /></g>,
];

const Kompas = ({ s }: { s: number }) => (
  <Svg width={s} height={s} viewBox="0 0 32 32" aria-hidden="true">
    <circle cx="16" cy="16" r="14" fill="#eaf5ff" stroke="#1680d8" strokeWidth="3.500" />
    <path d="M8 8h5v5l5 -5h6l-8 8l9 9l-3 2l-9 -9v10l-5 -4z" fill="#1272cc" />
    <path d="M19 15h10v3h-7z" fill="#1272cc" />
    <path d="M15 21l6 7h-5z" fill="#1272cc" />
  </Svg>
);

const rows: [string, string, boolean?][] = [
  ["origin", "(т)Начало координат", true],
  ["sketch", "Эскиз:1"],
  ["extrude", "Операция выдавливан"],
  ["sketch", "Эскиз:2"],
  ["cutop", "Операция выдавливан"],
  ["sketch", "Эскиз:3"],
  ["cutop", "Операция выдавливан"],
  ["array", "Массив по концентри", true],
  ["array", "Массив по концентри", true],
  ["sketch", "Эскиз:4"],
  ["cutop", "Операция выдавливан"],
  ["sketch", "Эскиз:5"],
  ["cutop", "Операция выдавливан"],
  ["sketch", "Эскиз:6"],
  ["cutop", "Операция выдавливан"],
];

const menu = [["", "Ф", "айл"], ["", "Р", "едактор"], ["", "В", "ид"], ["Опера", "ц", "ии"], ["С", "е", "рвис"], ["", "О", "кно"], ["", "С", "правка"]];

export default function App() {
  return (
    <Desktop>
      <Global />
      <TitleBar>
        <Kompas s={16} />
        <Title>КОМПАС-3D LT V12 - [Зольнова Настя]</Title>
        <Caption>
          <CaptionButton aria-label="Свернуть">
            <Svg width={14} height={12}><rect x="1.500" y="6.500" width="11" height="4" fill="#fff" stroke="#444f66" /></Svg>
          </CaptionButton>
          <CaptionButton aria-label="Восстановить">
            <Svg width={14} height={13}><path d="M4.500 1.500h8v8h-8zM1.500 4.500h8v8h-8z" fill="#fff" stroke="#444f66" /><path d="M4.500 7.500h2v2h-2z" fill="#667" stroke="#444f66" /></Svg>
          </CaptionButton>
          <CaptionButton $close aria-label="Закрыть">
            <Svg width={14} height={12}><path d="M3 2l8 8M11 2l-8 8" stroke="#444f66" strokeWidth="5" /><path d="M3 2l8 8M11 2l-8 8" stroke="#fff" strokeWidth="3" /></Svg>
          </CaptionButton>
        </Caption>
      </TitleBar>

      <MenuBar>
        <Grip />
        <Icon n="part" />
        {menu.map(([a, u, b]) => (
          <MenuItem key={a + u + b}>
            {a}
            <u>{u}</u>
            {b}
          </MenuItem>
        ))}
        <MdiButtons>
          <button aria-label="Свернуть документ"><Svg width={14} height={12}><rect x="3" y="8" width="6" height="2" /></Svg></button>
          <button aria-label="Восстановить документ"><Svg width={14} height={12} shapeRendering="crispEdges"><path d="M5.500 2.500h5v5h-2M3.500 5.500h5v4h-5zM5 2h6M3 5h6" fill="none" stroke="#000" /></Svg></button>
          <button aria-label="Закрыть документ"><Svg width={14} height={12}><path d="M3 2l7 7M10 2l-7 7" stroke="#000" strokeWidth="2" /></Svg></button>
        </MdiButtons>
      </MenuBar>

      <BarRow>
        <Toolbar>
          <Grip />
          {tools(["new"])}
          <Drop $w={11} aria-label="Создать" />
          {tools(["open", "save", "|", "preview", "print", "|", "cut", "copy", "paste", "|", "brush", "table", "|", "undo", "redo", "fx", "|", "help"])}
          <Fill $w={3} />
          <Cap aria-label="Параметры панели" />
        </Toolbar>
        <Toolbar $gap={1}>
          <Grip />
          {tools(["zoomPage", "|", "zoomRegion", "zoomDyn", "|", "zoomPm"])}
          <Combo $w={66}>
            <select aria-label="Масштаб" defaultValue="0.7527"><option>0.7527</option></select>
          </Combo>
          {tools(["|", "move", "*rotate", "axes", "v", "|", "cubeWire", "cubeHidden", "cubeThin", "*cubeShade", "|", "cubeEdges", "|", "persp", "|"])}
          <ToolButton $on $wide aria-label="Освещение">
            <Icon n="light" />
            <Drop as="span" />
          </ToolButton>
          {tools(["|", "crane", "refresh"])}
          <Fill $w={10} />
          <Cap aria-label="Параметры панели" />
        </Toolbar>
        <Toolbar $gap={1}>
          <Grip />
          {tools(["s1", "s2", "s3", "s4", "s5", "s6", "s7", "s8", "s9", "s10", "|", "mag", "|", "s11", "vd"])}
          <Fill $w={3} />
          <Cap aria-label="Параметры панели" />
        </Toolbar>
      </BarRow>

      <BarRow>
        <Toolbar>
          <Grip />
          {tools(["step"])}
          <Combo $w={60}>
            <select aria-label="Шаг курсора" defaultValue="1.0"><option>1.0</option></select>
          </Combo>
          {tools(["|", "layers"])}
          <Combo $w={84} $off>
            <select aria-label="Слой" disabled><option> </option></select>
          </Combo>
          {tools(["|", "sketchG", "|", "mag2", "mag", "|", "grid"])}
          <GridStep>5.0 x 5.0</GridStep>
          <Fill $w={6} />
          {tools(["vd", "|", "cs", "ortho", "|", "elbow", "*snapOn", "|", "yx"])}
          <Fill $w={1} />
          <Coord aria-label="Координата X" disabled />
          <Coord aria-label="Координата Y" disabled />
          <Fill $w={2} />
          <Cap aria-label="Параметры панели" />
        </Toolbar>
        <Toolbar $gap={66}>
          <Grip />
          {tools(["line", "layersB", "brick", "lcs"])}
          <Fill $w={2} />
          <Cap aria-label="Параметры панели" />
        </Toolbar>
      </BarRow>

      <Body>
        <Rail $top={0}>
          <Grip $flat />
          <TabGroup>
            {["lCube", "lSurf", "lCompass", "lFilter", "lLast"].map((n) => (
              <RailButton key={n} $short $on={n === "lSurf"} aria-label={n}>
                <Icon n={n} />
              </RailButton>
            ))}
          </TabGroup>
          <RailSep />
          <RailItems names={["l1", "l2", "l3", "l4", "l5", "l6", "|", "l7", "l8", "|", "l9", "l10", "l11", "|", "l12", "l13"]} />
        </Rail>
        <Rail $top={39}>
          <Grip $flat />
          <RailItems names={["p1", "p2", "p3", "p4", "p5", "p6", "p7", "p8", "p9", "p10", "p11", "p12", "p13", "p14", "|", "p15"]} />
        </Rail>
        <Rail $top={58}>
          <Grip $flat />
          <RailItems names={["q1", "q2", "q3", "q4", "q5", "|", "q6", "|", "q7"]} />
        </Rail>

        <Panel>
          <PanelHead>
            <span>Дерево модели</span>
            <button aria-label="Закрепить"><Svg width={16} height={14} shapeRendering="crispEdges"><path d="M5.500 3v6M5 3.500h5M9 3v6M10 3v6M3 9.500h9M7.500 10v3" stroke="#000" /></Svg></button>
            <button aria-label="Закрыть"><Svg width={14} height={14}><path d="M3 4l7 7M10 4l-7 7" stroke="#000" strokeWidth="2" /></Svg></button>
          </PanelHead>
          <PanelTools>
            {tools(["treeA"])}
            <Fill $w={2} />
            {tools(["treeB", "vd", "|", "*treeC", "treeD"])}
          </PanelTools>
          <Frames>
            <TreeFrame>
              <Tree>
                <TreeRow $root>
                  <Icon n="detail" />
                  Деталь (Тел-1)
                </TreeRow>
                {rows.map(([n, t, ex], i) => (
                  <TreeRow key={i}>
                    {ex && <Expander aria-label="Развернуть" />}
                    <Icon n={n} />
                    {t}
                  </TreeRow>
                ))}
              </Tree>
              <VScroll>
                <Arrow $dir="up" aria-label="Вверх" />
                <Thumb $v />
                <Rest $n={88} />
                <Arrow $dir="down" aria-label="Вниз" />
              </VScroll>
              <HScroll>
                <Arrow $dir="left" aria-label="Влево" />
                <Thumb />
                <Rest $n={45} />
                <Arrow $dir="right" aria-label="Вправо" />
              </HScroll>
            </TreeFrame>
            <DetailFrame />
          </Frames>
          <TabStrip>
            <Tab>Построение</Tab>
          </TabStrip>
        </Panel>

        <View>
          <Model />
        </View>
      </Body>

      <Properties>
        <PropGrip />
        <PropTools>
          <StopButton aria-label="Прервать команду">
            <Icon n="stop" />
            <StopText>STOP</StopText>
          </StopButton>
          <ToolButton aria-label="Справка">
            <Icon n="ask" />
          </ToolButton>
        </PropTools>
        <PropMain>
          <PropField><div /></PropField>
          <TabStrip $tall>
            <Tab $icon>
              <Icon n="rotate" />
              Повернуть
            </Tab>
          </TabStrip>
        </PropMain>
      </Properties>

      <Status>Нажмите левую кнопку мыши и, не отпуская, поверните изображение</Status>

      <Taskbar>
        <TaskButton $w={54} aria-label="Пуск">
          <Svg width={38} height={38} viewBox="0 0 38 38">
            <defs>
              <radialGradient id="orb" cx="50%" cy="90%" r="80%">
                <stop offset="0" stopColor="#18c8ff" />
                <stop offset="0.500" stopColor="#1c6cb4" />
                <stop offset="1" stopColor="#9cc4dc" />
              </radialGradient>
            </defs>
            <circle cx="19" cy="19" r="17.500" fill="url(#orb)" stroke="#16395c" />
            <path d="M11 9q4 -2 8 0l-2 8q-4 -2 -8 0z" fill="#f0642c" />
            <path d="M20 10q4 2 9 0l-2 8q-4 2 -9 0z" fill="#8cc83c" />
            <path d="M8 19q4 -2 8 0l-2 8q-4 -2 -8 0z" fill="#38a8f0" />
            <path d="M17 20q4 2 9 0l-2 8q-4 2 -9 0z" fill="#ffc828" />
          </Svg>
        </TaskButton>
        <TaskButton $w={67} aria-label="Приложение">
          <Svg width={26} height={32}>
            <path d="M1.500 1.500h18l5 5v24h-23z" fill="#f8f8f8" stroke="#777" />
            <path d="M19.500 1.500v5h5" fill="#ddd" stroke="#777" />
            <path d="M5.500 8.500h16v15h-16z" fill="#fff" stroke="#333" />
            <path d="M5 9h17v2h-17z" fill="#1010a0" />
            <circle cx="9.500" cy="17" r="2" fill="#c00" /><path d="M12 15h3v4h-3z" fill="#0000c0" /><path d="M16 19l2 -5l2 5z" fill="#080" />
          </Svg>
        </TaskButton>
        <TaskButton $w={60} $open aria-label="Проводник">
          <Svg width={34} height={32}>
            <path d="M2 4h10l2 3h16v21h-28z" fill="#e8c860" stroke="#b89030" />
            <path d="M12 2h8l1 3h10v20h-19z" fill="#f6e29a" stroke="#c8a850" />
            <path d="M2 9h28v19h-28z" fill="#f8e49c" />
            <path d="M5 3h4v2h-4z" fill="#0a0" /><path d="M13 4h4v2h-4z" fill="#e22" /><path d="M22 6h4v2h-4z" fill="#28e" />
            <path d="M6 31v-9q0 -4 4 -4h15q4 0 4 4v9h-5v-8h-13v8z" fill="#8cd0ec" stroke="#5aa8cc" />
          </Svg>
        </TaskButton>
        <TaskButton $w={62} aria-label="Проигрыватель">
          <Svg width={30} height={28}>
            <path d="M1 3h19v22h-19z" fill="#6cb4dc" stroke="#4088b0" /><path d="M20 4l4 1v20l-4 1z" fill="#4c9cc8" /><path d="M25 6l2 1v16l-2 1z" fill="#88c4e0" />
            <circle cx="11" cy="14" r="9" fill="#f47c14" stroke="#d8d8d8" /><path d="M8 8l8 6l-8 6z" fill="#fff" />
          </Svg>
        </TaskButton>
        <TaskButton $w={60} $open aria-label="Word">
          <Svg width={32} height={32}>
            <path d="M16 4h14v24h-14z" fill="#fff" stroke="#2b579a" />
            <path d="M18 8.500h10M18 11.500h10M18 14.500h10M18 17.500h10M18 20.500h10M18 23.500h10" stroke="#2b579a" />
            <path d="M1 4l18 -3v30l-18 -3z" fill="#2b579a" />
            <path d="M5 11l2 10l3 -9l3 9l2 -10" fill="none" stroke="#fff" strokeWidth="2" />
          </Svg>
        </TaskButton>
        <TaskButton $w={55} $open $active aria-label="КОМПАС-3D">
          <Kompas s={32} />
        </TaskButton>
        <Tray>
          <Lang>RU</Lang>
          {TrayIcons.map((g, i) => (
            <Svg key={i} width={16} height={16} viewBox="0 0 16 16">{g}</Svg>
          ))}
        </Tray>
        <Clock>
          10:32
          <br />
          29.10.2023
        </Clock>
        <ShowDesktop aria-label="Свернуть все окна" />
      </Taskbar>
    </Desktop>
  );
}
